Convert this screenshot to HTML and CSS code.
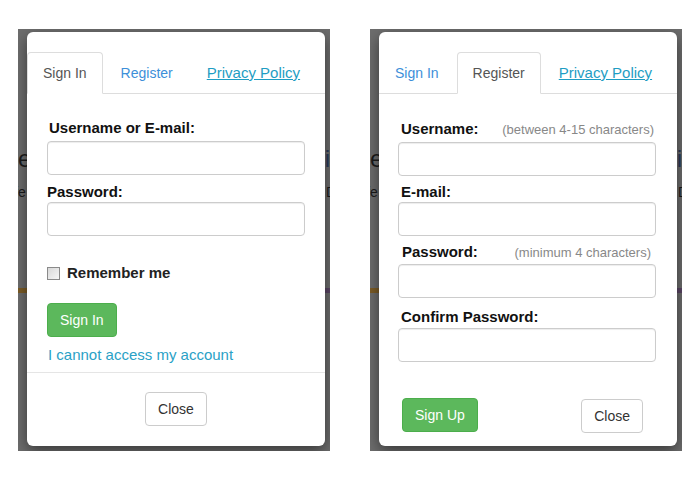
FILE: index.html
```html
<!DOCTYPE html>
<html>
<head>
<meta charset="utf-8">
<link rel="stylesheet" href="styles.css">
</head>
<body>
  <div class="screen">
    <div class="page">
      <div class="page-title"><span>e</span><span class="t-right">i</span></div>
      <div class="page-sub"><span class="s-left">fe</span><span class="s-right">D</span></div>
      <div class="page-bar"></div>
    </div>
    <div class="modal">
      <ul class="tabs">
        <li class="tab active">Sign In</li>
        <li class="tab link">Register</li>
        <li class="tab policy">Privacy Policy</li>
      </ul>
      <div class="body body-signin">
        <label class="lbl lbl-first">Username or E-mail:</label>
        <input class="field" type="text">
        <label class="lbl lbl-next">Password:</label>
        <input class="field" type="password">
        <div class="remember"><input class="check" type="checkbox"><span>Remember me</span></div>
        <button class="btn btn-green btn-signin">Sign In</button>
        <a class="forgot">I cannot access my account</a>
      </div>
      <div class="footer">
        <button class="btn btn-plain">Close</button>
      </div>
    </div>
  </div>

  <div class="screen">
    <div class="page">
      <div class="page-title"><span>e</span><span class="t-right">i</span></div>
      <div class="page-sub"><span class="s-left">fe</span><span class="s-right">D</span></div>
      <div class="page-bar"></div>
    </div>
    <div class="modal">
      <ul class="tabs">
        <li class="tab link">Sign In</li>
        <li class="tab active">Register</li>
        <li class="tab policy">Privacy Policy</li>
      </ul>
      <div class="body body-register">
        <div class="row-lbl r1"><label class="lbl">Username:</label><span class="hint">(between 4-15 characters)</span></div>
        <input class="field f1" type="text">
        <div class="row-lbl r2"><label class="lbl">E-mail:</label></div>
        <input class="field" type="text">
        <div class="row-lbl r3"><label class="lbl lbl-pw">Password:</label><span class="hint hint-pw">(minimum 4 characters)</span></div>
        <input class="field" type="password">
        <div class="row-lbl r4"><label class="lbl">Confirm Password:</label></div>
        <input class="field" type="password">
      </div>
      <div class="reg-actions">
        <button class="btn btn-green">Sign Up</button>
        <button class="btn btn-plain btn-close2">Close</button>
      </div>
    </div>
  </div>
</body>
</html>
```

FILE: styles.css
```css
* { box-sizing: border-box; }

body {
  margin: 0;
  padding: 29px 0 0 18px;
  display: flex;
  gap: 40px;
  background: #fff;
  font-family: "Liberation Sans", Arial, sans-serif;
  font-size: 14px;
  line-height: 20px;
  color: #333;
}

.screen {
  position: relative;
  width: 312px;
  height: 422px;
  background: #6e6e6e;
  overflow: hidden;
}

/* page behind the backdrop */
.page {
  padding-top: 115px;
  color: #1a1a1a;
}
.page-title {
  display: flex;
  justify-content: space-between;
  font-size: 24px;
  line-height: 30px;
}
.page-title .t-right { color: #2a3a5a; }
.page-sub {
  display: flex;
  justify-content: space-between;
  margin-top: 8px;
  font-size: 14px;
  line-height: 20px;
}
.page-sub .s-left { margin-left: -4px; }
.page-sub .s-right { margin-right: -6px; }
.page-bar {
  margin-top: 86px;
  height: 5px;
  background: linear-gradient(to right, #7d5d27 0 50%, #5c4766 50% 100%);
}

/* modal overlay */
.modal {
  position: absolute;
  top: 3px;
  left: 9px;
  width: 298px;
  height: 414px;
  background: #fff;
  border-radius: 6px;
  box-shadow: 0 5px 15px rgba(0, 0, 0, 0.5);
  display: flex;
  flex-direction: column;
}

.tabs {
  list-style: none;
  margin: 20px 0 0;
  padding: 0;
  display: flex;
  border-bottom: 1px solid #ddd;
}
.tab {
  padding: 10px 15px;
  border: 1px solid transparent;
  border-radius: 4px 4px 0 0;
  margin-right: 2px;
  margin-bottom: -1px;
  white-space: nowrap;
}
.tab.active {
  border-color: #ddd #ddd transparent;
  background: #fff;
  color: #555;
}
.tab.link { color: #3d8fd9; }
.tab.policy {
  color: #1e9dc3;
  text-decoration: underline;
  font-size: 15px;
}

.body {
  padding: 0 20px;
  display: flex;
  flex-direction: column;
  align-items: flex-start;
}
.body-signin { padding-top: 24px; padding-bottom: 7px; }
.body-register { padding: 25px 21px 0 19px; }

.lbl {
  font-weight: bold;
  font-size: 15px;
  line-height: 20px;
  color: #111;
}
.lbl-first { padding-left: 2px; margin-bottom: 3px; }
.lbl-next { margin-top: 7px; }

.field {
  display: block;
  width: 100%;
  height: 34px;
  margin: 0;
  border: 1px solid #ccc;
  border-radius: 4px;
  background: #fff;
  box-shadow: inset 0 1px 1px rgba(0, 0, 0, 0.075);
  font: inherit;
}

.remember {
  margin-top: 27px;
  display: flex;
  align-items: center;
  gap: 7px;
  height: 20px;
  font-weight: bold;
  font-size: 15px;
  color: #222;
}
.check {
  appearance: none;
  -webkit-appearance: none;
  margin: 1px 0 0;
  width: 13px;
  height: 13px;
  border: 1px solid #8a8a8a;
  background: linear-gradient(135deg, #d8d8d8, #f6f6f6);
}

.btn {
  height: 34px;
  padding: 6px 12px;
  font: inherit;
  font-size: 14px;
  line-height: 20px;
  border: 1px solid transparent;
  border-radius: 4px;
  cursor: pointer;
}
.btn-green {
  background: #5cb85c;
  border-color: #4cae4c;
  color: #fff;
}
.btn-plain {
  background: #fff;
  border-color: #ccc;
  color: #333;
}
.btn-signin { margin-top: 20px; }

.forgot {
  margin-top: 8px;
  padding-left: 1px;
  font-size: 15px;
  line-height: 20px;
  color: #2aa1c6;
}

.footer {
  border-top: 1px solid #e5e5e5;
  padding: 19px 0 20px;
  text-align: center;
}

/* register form */
.row-lbl {
  width: 100%;
  display: flex;
  justify-content: space-between;
  align-items: baseline;
  padding: 0 2px 0 3px;
}
.r2 { margin-top: 6px; }
.r3 { margin-top: 6px; margin-bottom: 1px; }
.r4 { margin-top: 9px; margin-bottom: 1px; }
.f1 { margin-top: 2px; }
.lbl-pw { padding-left: 1px; }
.hint {
  font-size: 13px;
  color: #888;
}
.hint-pw { padding-right: 3px; }

.reg-actions {
  margin-top: 36px;
  padding: 0 34px 0 23px;
  display: flex;
  justify-content: space-between;
  align-items: flex-start;
}
.btn-close2 { margin-top: 1px; }
```
